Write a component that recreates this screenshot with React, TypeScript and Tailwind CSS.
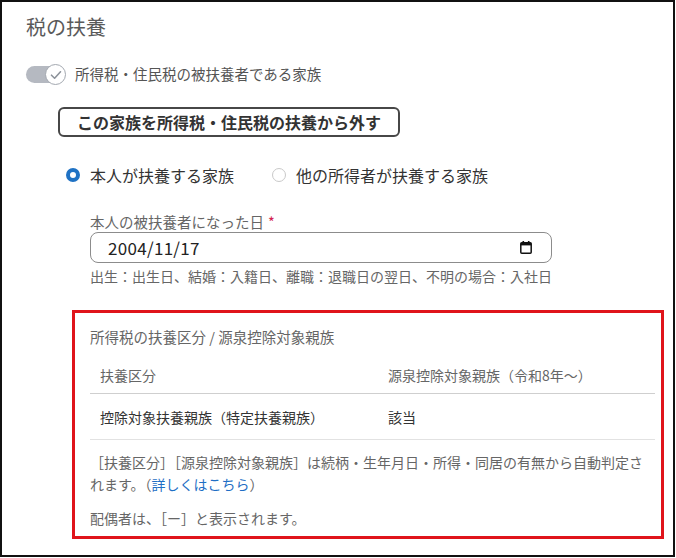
const font = { fontFamily: '"Noto Sans CJK JP", "Noto Sans", sans-serif' };

function Toggle() {
  return (
    <div className="relative h-[20px] w-[40px]">
      <div className="absolute left-0 top-[2px] h-[17px] w-[39px] rounded-full bg-[#b5b9c1]" />
      <div className="absolute left-[19px] top-0 flex h-[21px] w-[21px] items-center justify-center rounded-full border-[1.5px] border-[#a3a8b0] bg-white">
        <svg width="12" height="10" viewBox="0 0 12 10" fill="none">
          <path d="M1.5 5.2 L4.6 8.2 L10.5 1.8" stroke="#8d939b" strokeWidth="1.6" strokeLinecap="round" strokeLinejoin="round" />
        </svg>
      </div>
    </div>
  );
}

function CalendarIcon() {
  return (
    <svg width="12" height="13" viewBox="0 0 12 13" fill="none">
      <rect x="2.5" y="0" width="1.6" height="2.5" fill="#111" />
      <rect x="7.9" y="0" width="1.6" height="2.5" fill="#111" />
      <rect x="0.8" y="1.8" width="10.4" height="10.4" rx="1" stroke="#111" strokeWidth="1.5" />
      <rect x="0.8" y="1.8" width="10.4" height="2.6" fill="#111" />
    </svg>
  );
}

export default function App() {
  return (
    <div className="h-[558px] w-[676px] bg-white" style={font}>
      <div className="h-[557px] w-[675px] border-2 border-[#111] pl-[24px] pt-[11px]">
        <h2 className="text-[20px] leading-[28px] text-[#5a5a5a]">税の扶養</h2>

        <div className="mt-[22px] flex h-[22px] items-center">
          <Toggle />
          <span className="ml-[9px] text-[14.5px] leading-[22px] text-[#555]">所得税・住民税の被扶養者である家族</span>
        </div>

        <button className="ml-[32px] mt-[22px] h-[30px] rounded-[6px] border-2 border-[#474747] px-[17px] text-[16px] font-bold leading-[26px] text-[#333]">
          この家族を所得税・住民税の扶養から外す
        </button>

        <div className="ml-[40px] mt-[26px] flex h-[24px] items-center text-[16px] leading-[24px] text-[#333]">
          <span className="h-[14px] w-[14px] rounded-full border-[4px] border-[#1f72c4] bg-white" />
          <span className="ml-[10px]">本人が扶養する家族</span>
          <span className="ml-[38px] h-[14px] w-[14px] rounded-full border border-[#c9c9c9] bg-white" />
          <span className="ml-[10px]">他の所得者が扶養する家族</span>
        </div>

        <div className="ml-[64px] mt-[25px]">
          <div className="text-[14.5px] leading-[20px] text-[#666]">
            本人の被扶養者になった日<span className="ml-[4px] text-[#d3234f]">*</span>
          </div>
          <div className="flex h-[31px] w-[462px] items-center justify-between rounded-[8px] border-[1.5px] border-[#8c8c8c] pl-[17px] pr-[19px]">
            <span className="text-[17px] leading-[24px] tracking-[0.3px] text-[#222]">2004/11/17</span>
            <CalendarIcon />
          </div>
          <div className="mt-[3px] text-[14px] leading-[20px] text-[#666]">
            出生：出生日、結婚：入籍日、離職：退職日の翌日、不明の場合：入社日
          </div>
        </div>

        <div className="ml-[46px] mt-[24px] w-[592px] border-[3px] border-[#e0141b] pb-[7px] pl-[15px] pr-[6px] pt-[14px]">
          <div className="mb-2 text-[14.5px] leading-[20px] text-[#666]">所得税の扶養区分 / 源泉控除対象親族</div>
          <div className="flex border-b border-[#cfcfcf] pb-[8px] pt-[10px] text-[14px] leading-[20px] text-[#666]">
            <div className="w-[298px] pl-[10px]">扶養区分</div>
            <div>源泉控除対象親族（令和8年〜）</div>
          </div>
          <div className="flex border-b border-[#e2e2e2] pb-[12px] pt-[13px] text-[14px] leading-[20px] text-[#333]">
            <div className="w-[298px] pl-[10px]">控除対象扶養親族（特定扶養親族）</div>
            <div>該当</div>
          </div>
          <p className="mt-[11px] text-[14px] leading-[22px] text-[#666]">
            ［扶養区分］［源泉控除対象親族］は続柄・生年月日・所得・同居の有無から自動判定されます。（<a className="text-[#1f6fc5]">詳しくはこちら</a>）
          </p>
          <p className="mt-[12px] text-[14px] leading-[22px] text-[#666]">配偶者は、［ー］と表示されます。</p>
        </div>
      </div>
    </div>
  );
}
